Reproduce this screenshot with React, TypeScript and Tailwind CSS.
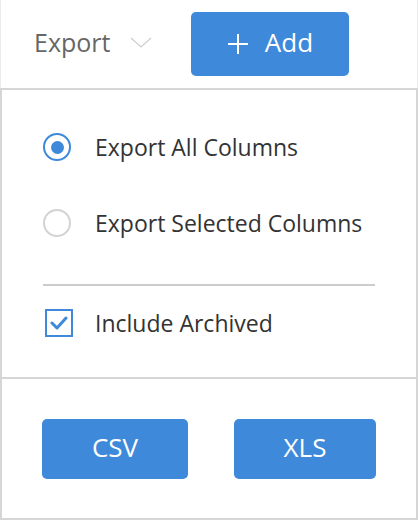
import React, { FC, useState } from 'react';

const font = { fontFamily: '"Open Sans", "Noto Sans", sans-serif' };

const Radio: FC<{ checked: boolean }> = ({ checked }) => (
  <span
    className={`flex h-[28px] w-[28px] shrink-0 items-center justify-center rounded-full border-2 ${
      checked ? 'border-[#3e89da]' : 'border-[#d3d3d3]'
    }`}
  >
    {checked && <span className="h-[13px] w-[13px] rounded-full bg-[#3e89da]" />}
  </span>
);

const App: FC = () => {
  const [mode, setMode] = useState<'all' | 'selected'>('all');
  const [archived, setArchived] = useState(true);

  return (
    <div className="h-[520px] w-[418px] border-x border-[#ececec] bg-white" style={font}>
      <div className="flex h-[88px] items-start pt-[12px]">
        <button className="ml-[33px] mt-[12px] flex items-center text-[25px] leading-[36px] text-[#666]">
          Export
          <svg className="ml-[20px] mt-[2px]" width="22" height="12" viewBox="0 0 22 12">
            <path d="M1 1 L11 10 L21 1" fill="none" stroke="#cfcfcf" strokeWidth="1.3" />
          </svg>
        </button>
        <button className="ml-[39px] flex h-[64px] w-[158px] items-center justify-center gap-[17px] rounded-[5px] bg-[#3e89da] pb-[3px] text-[26px] text-white">
          <svg className="mt-[3px]" width="20" height="20" viewBox="0 0 20 20">
            <path d="M10 0 V20 M0 10 H20" stroke="white" strokeWidth="2" />
          </svg>
          Add
        </button>
      </div>

      <div className="-mx-px h-[432px] border-2 border-[#d6d6d6]">
        <div className="px-[41px] pt-[42px]">
          <label className="flex h-[30px] cursor-pointer items-center gap-[24px]" onClick={() => setMode('all')}>
            <Radio checked={mode === 'all'} />
            <span className="text-[23px] text-[#333]">Export All Columns</span>
          </label>
          <label
            className="mt-[46px] flex h-[30px] cursor-pointer items-center gap-[24px]"
            onClick={() => setMode('selected')}
          >
            <Radio checked={mode === 'selected'} />
            <span className="text-[23px] text-[#333]">Export Selected Columns</span>
          </label>
          <div className="mt-[46px] h-[2px] bg-[#cccccc]" />
          <label
            className="mt-[22px] flex h-[30px] cursor-pointer items-center gap-[24px]"
            onClick={() => setArchived(!archived)}
          >
            <span className="ml-[2px] flex h-[28px] w-[28px] shrink-0 items-center justify-center border-2 border-[#3e89da]">
              {archived && (
                <svg width="18" height="14" viewBox="0 0 18 14">
                  <path d="M2 7 L7 12 L16 2" fill="none" stroke="#3e89da" strokeWidth="3" strokeLinecap="round" strokeLinejoin="round" />
                </svg>
              )}
            </span>
            <span className="-ml-[2px] text-[23px] text-[#333]">Include Archived</span>
          </label>
        </div>
        <div className="mt-[39px] h-[2px] bg-[#d6d6d6]" />
        <div className="flex gap-[46px] px-[40px] pt-[40px]">
          <button className="flex h-[60px] w-[146px] items-center justify-center rounded-[5px] bg-[#3e89da] pb-[3px] text-[26px] text-white">
            CSV
          </button>
          <button className="flex h-[60px] w-[142px] items-center justify-center rounded-[5px] bg-[#3e89da] pb-[3px] text-[26px] text-white">
            XLS
          </button>
        </div>
      </div>
    </div>
  );
};

export default App;
